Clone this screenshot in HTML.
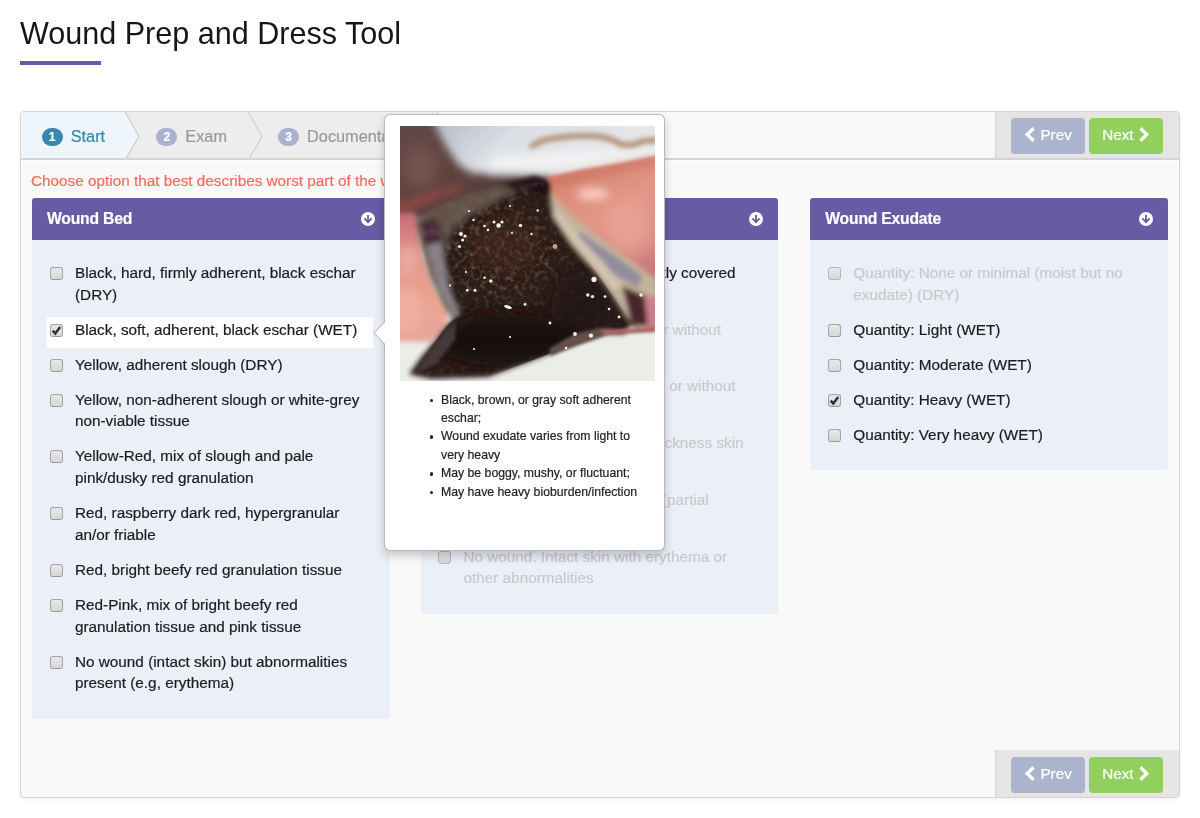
<!DOCTYPE html>
<html lang="en">
<head>
<meta charset="utf-8">
<title>Wound Prep and Dress Tool</title>
<style>
*{box-sizing:border-box}
html,body{margin:0;padding:0}
html{background:#fff}
body{width:1200px;height:818px;overflow:hidden;background:#fff;will-change:transform;font-family:"Liberation Sans",Arial,Helvetica,sans-serif;font-size:15.3px;line-height:22px;color:#1c1c1c;position:relative;-webkit-text-stroke:0.2px currentColor}
h1{position:absolute;left:20px;top:10px;margin:0;font-size:30.55px;line-height:46px;font-weight:400;color:#161616;-webkit-text-stroke:0;white-space:nowrap}
.rule{position:absolute;left:20px;top:61px;width:81px;height:4px;background:#6a5aa8}
.wizard{position:absolute;left:20px;top:111px;width:1160px;height:687px;border:1px solid #d4d4d4;border-radius:4px;background:#f9f9f9;box-shadow:0 1px 4px rgba(0,0,0,.065)}
.stepsbar{position:absolute;left:0;top:0;right:0;height:48px;border-bottom:1px solid #d4d4d4;background:#f9f9f9;border-radius:4px 4px 0 0;overflow:hidden}
.steps{list-style:none;margin:0;padding:0;position:absolute;left:0;top:0;height:47px;white-space:nowrap;font-size:0}
.steps li{display:inline-block;vertical-align:top;position:relative;height:47px;line-height:49px;padding:0 20.7px 0 31.4px;background:#ededed;color:#999;font-size:16.3px}
.steps li:first-child{padding-left:20.7px;padding-right:19.9px;border-radius:4px 0 0 0}
.steps li:last-child{padding-left:30.4px}
.steps li.active{background:#eef6fc;color:#3a87ad}
.steps li svg.chev{position:absolute;top:0;right:-15px;width:15px;height:48px;z-index:1}
.stepsbar:after{content:"";position:absolute;left:0;right:0;bottom:0;height:1px;background:#d4d4d4;z-index:3}
.wizard:before{content:"";position:absolute;left:0;right:0;top:48px;height:1px;background:#fff}
.badge{display:inline-block;min-width:21px;height:18px;line-height:18px;border-radius:9px;background:#a9b2d3;color:#fff;font-size:12px;font-weight:700;text-align:center;vertical-align:middle;margin-right:8px;position:relative;top:-1px}
.active .badge{background:#3a87ad}
.actions{position:absolute;right:0;width:184px;height:47px;background:#e5e5e5;border-left:1px solid #d4d4d4;padding:6px 0 0 15px;font-size:0;white-space:nowrap}
.actions.top{top:0;border-radius:0 4px 0 0}
.actions.bot{bottom:0;border-radius:0 0 4px 0;height:47px;padding-top:7px}
.btn{display:inline-block;height:36px;line-height:34.5px;width:74px;border-radius:4px;color:#fff;font-size:15.3px;text-align:center;vertical-align:top}
.btn.prev{background:#acb4cd;margin-right:4px}
.btn.next{background:#91cf5e}
.btn svg{width:12px;height:15px;vertical-align:-2px}
.hint{position:absolute;left:10px;top:58px;color:#f86b5c;font-size:15.3px;line-height:22px;white-space:nowrap}
.panel{position:absolute;top:86px;width:358px;background:#ebf0f8;border-radius:2px}
.panel .hd{height:42px;line-height:41px;background:#695aa5;color:#fff;font-weight:700;font-size:15.7px;padding-left:15px;border-radius:3px 3px 0 0;position:relative;letter-spacing:-0.2px}
.panel .hd svg{position:absolute;right:15px;top:14px;width:14px;height:14px}
.panel .bd{padding:21.8px 16px 11.5px 16px;line-height:21.75px}
.opt{position:relative;padding:0 14px 8px 27px;margin-bottom:5.25px}
.opt.sel{background:#fff;margin-top:-1.3px;padding-top:1.3px;margin-left:-1px;padding-left:28px;margin-right:.7px}
.opt.sel .cb{top:6.3px;left:2.5px}
.opt.dis{color:#c9c9c9}
.cb{position:absolute;left:1.5px;top:5px;width:13px;height:13px;border:1px solid #a4a4a4;border-bottom-color:#999;border-radius:3px;background:linear-gradient(#e8e8e8,#d8d8d8)}
.cb svg{position:absolute;left:-1px;top:-1px;width:13px;height:13px}
.dis .cb{border-color:#b5b5b5}

.pop{position:absolute;left:384px;top:114px;width:281px;height:437px;background:#fff;border:1px solid rgba(0,0,0,.28);border-radius:6px;box-shadow:0 5px 10px rgba(0,0,0,.2);z-index:10}
.pop .arr{position:absolute;left:-12px;top:206px;width:12px;height:24px}
.pop svg.photo{position:absolute;left:15px;top:11px;width:255px;height:255px;display:block}
.pop ul{position:absolute;left:15px;top:275.6px;width:260px;margin:0;padding:0 0 0 41px;list-style:none;font-size:12.25px;line-height:18.4px;color:#222}
.pop li{position:relative;white-space:nowrap}
.pop li:before{content:"";position:absolute;left:-11.5px;top:8px;width:3.4px;height:3.4px;border-radius:50%;background:#222}
.l1{display:block;text-align:right;white-space:nowrap}
</style>
</head>
<body>
<h1>Wound Prep and Dress Tool</h1>
<div class="rule"></div>
<div class="wizard">
  <div class="stepsbar">
    <ul class="steps">
      <li class="active"><span class="badge">1</span>Start<svg class="chev" viewBox="0 0 15 48"><path d="M0 0 L14 24.4 L0 48Z" fill="#eef6fc"/><path d="M0 -0.5 L14 24.4 L0 48.5" fill="none" stroke="#d0d0d0" stroke-width="1.3"/></svg></li><li><span class="badge">2</span>Exam<svg class="chev" viewBox="0 0 15 48"><path d="M0 0 L14 24.4 L0 48Z" fill="#ededed"/><path d="M0 -0.5 L14 24.4 L0 48.5" fill="none" stroke="#d0d0d0" stroke-width="1.3"/></svg></li><li><span class="badge">3</span>Documentation<svg class="chev" viewBox="0 0 15 48"><path d="M0 0 L14 24.4 L0 48Z" fill="#ededed"/><path d="M0 -0.5 L14 24.4 L0 48.5" fill="none" stroke="#d0d0d0" stroke-width="1.3"/></svg></li>
    </ul>
    <div class="actions top"><span class="btn prev"><svg viewBox="0 0 12 15"><path d="M9.6 1.2 L3.2 7.5 L9.6 13.8" fill="none" stroke="#fff" stroke-width="3.3"/></svg> Prev</span><span class="btn next">Next <svg viewBox="0 0 12 15"><path d="M2.4 1.2 L8.8 7.5 L2.4 13.8" fill="none" stroke="#fff" stroke-width="3.3"/></svg></span></div>
  </div>
  <div class="hint">Choose option that best describes worst part of the wound</div>

  <div class="panel" id="p1" style="left:11px;width:357.7px">
    <div class="hd">Wound Bed<svg viewBox="0 0 14 14"><circle cx="7" cy="7" r="7" fill="#fff"/><path d="M7 2.9v6.6M3.4 6.3L7 10.1l3.6-3.8" fill="none" stroke="#695aa5" stroke-width="1.8"/></svg></div>
    <div class="bd">
      <div class="opt"><span class="cb"></span>Black, hard, firmly adherent, black eschar (DRY)</div>
      <div class="opt sel"><span class="cb"><svg viewBox="0 0 13 13"><path d="M2.7 6.6L5.3 9.6L10.2 3.1" fill="none" stroke="#333" stroke-width="2.5"/></svg></span>Black, soft, adherent, black eschar (WET)</div>
      <div class="opt"><span class="cb"></span>Yellow, adherent slough (DRY)</div>
      <div class="opt"><span class="cb"></span>Yellow, non-adherent slough or white-grey non-viable tissue</div>
      <div class="opt"><span class="cb"></span>Yellow-Red, mix of slough and pale pink/dusky red granulation</div>
      <div class="opt"><span class="cb"></span>Red, raspberry dark red, hypergranular an/or friable</div>
      <div class="opt"><span class="cb"></span>Red, bright beefy red granulation tissue</div>
      <div class="opt"><span class="cb"></span>Red-Pink, mix of bright beefy red granulation tissue and pink tissue</div>
      <div class="opt"><span class="cb"></span>No wound (intact skin) but abnormalities present (e.g, erythema)</div>
    </div>
  </div>

  <div class="panel" id="p2" style="left:399.5px;width:357.7px">
    <div class="hd">Wound Depth<svg viewBox="0 0 14 14"><circle cx="7" cy="7" r="7" fill="#fff"/><path d="M7 2.9v6.6M3.4 6.3L7 10.1l3.6-3.8" fill="none" stroke="#695aa5" stroke-width="1.8"/></svg></div>
    <div class="bd">
      <div class="opt"><span class="cb"></span><span class="l1" style="width:272px">Unable to determine, mostly covered</span>with eschar</div>
      <div class="opt dis"><span class="cb"></span><span class="l1" style="width:257.6px">Deep wound/cavity, with or without</span>undermining</div>
      <div class="opt dis"><span class="cb"></span><span class="l1" style="width:272px">Moderate depth wound, with or without</span>tunneling</div>
      <div class="opt dis"><span class="cb"></span><span class="l1" style="width:280.1px">Shallow wound with full thickness skin</span>loss</div>
      <div class="opt dis"><span class="cb"></span><span class="l1" style="width:245.2px">Superficial wound, abrasion (partial</span>thickness)</div>
      <div class="opt dis"><span class="cb"></span>No wound. Intact skin with erythema or other abnormalities</div>
    </div>
  </div>

  <div class="panel" id="p3" style="left:789.3px;width:357.7px">
    <div class="hd">Wound Exudate<svg viewBox="0 0 14 14"><circle cx="7" cy="7" r="7" fill="#fff"/><path d="M7 2.9v6.6M3.4 6.3L7 10.1l3.6-3.8" fill="none" stroke="#695aa5" stroke-width="1.8"/></svg></div>
    <div class="bd">
      <div class="opt dis"><span class="cb"></span>Quantity: None or minimal (moist but no exudate) (DRY)</div>
      <div class="opt"><span class="cb"></span>Quantity: Light (WET)</div>
      <div class="opt"><span class="cb"></span>Quantity: Moderate (WET)</div>
      <div class="opt"><span class="cb"><svg viewBox="0 0 13 13"><path d="M2.7 6.6L5.3 9.6L10.2 3.1" fill="none" stroke="#333" stroke-width="2.5"/></svg></span>Quantity: Heavy (WET)</div>
      <div class="opt"><span class="cb"></span>Quantity: Very heavy (WET)</div>
    </div>
  </div>

  <div class="actions bot"><span class="btn prev"><svg viewBox="0 0 12 15"><path d="M9.6 1.2 L3.2 7.5 L9.6 13.8" fill="none" stroke="#fff" stroke-width="3.3"/></svg> Prev</span><span class="btn next">Next <svg viewBox="0 0 12 15"><path d="M2.4 1.2 L8.8 7.5 L2.4 13.8" fill="none" stroke="#fff" stroke-width="3.3"/></svg></span></div>
</div>

<div class="pop">
  <svg class="arr" viewBox="0 0 12 24"><path d="M12 0.5 L1 12 L12 23.5" fill="#fff" stroke="rgba(0,0,0,.3)" stroke-width="1"/></svg>
  <svg class="photo" viewBox="0 0 255 255"><!--PHOTO--><defs>
<filter id="b1" filterUnits="userSpaceOnUse" x="-30" y="-30" width="315" height="315"><feGaussianBlur stdDeviation="1.8"/></filter>
<filter id="b2" filterUnits="userSpaceOnUse" x="-30" y="-30" width="315" height="315"><feGaussianBlur stdDeviation="2.6"/></filter>
<filter id="b3" filterUnits="userSpaceOnUse" x="-30" y="-30" width="315" height="315"><feGaussianBlur stdDeviation="4"/></filter>
<filter id="b6" filterUnits="userSpaceOnUse" x="-40" y="-40" width="335" height="335"><feGaussianBlur stdDeviation="8"/></filter>
<filter id="b05" filterUnits="userSpaceOnUse" x="-30" y="-30" width="315" height="315"><feGaussianBlur stdDeviation="0.7"/></filter>
<filter id="gr" filterUnits="userSpaceOnUse" x="0" y="0" width="255" height="255"><feTurbulence type="fractalNoise" baseFrequency="0.2" numOctaves="2" seed="7"/><feColorMatrix type="matrix" values="0 0 0 0 0.34  0 0 0 0 0.2  0 0 0 0 0.16  1.5 0 0 0 -0.7"/><feGaussianBlur stdDeviation="0.7"/></filter>
<filter id="gr2" filterUnits="userSpaceOnUse" x="0" y="0" width="255" height="255"><feTurbulence type="fractalNoise" baseFrequency="0.09" numOctaves="3" seed="3"/><feColorMatrix type="matrix" values="0 0 0 0 0.2  0 0 0 0 0.14  0 0 0 0 0.14  1.4 0 0 0 -0.6"/><feGaussianBlur stdDeviation="1"/></filter>
<linearGradient id="gcl" x1="0" y1="0" x2="1" y2="0.25"><stop offset="0.1" stop-color="#b4b9c6"/><stop offset="0.45" stop-color="#dcdfe4"/><stop offset="1" stop-color="#e6e8ea"/></linearGradient>
<linearGradient id="gsk" x1="0" y1="0" x2="0.3" y2="1"><stop offset="0" stop-color="#d67e6a"/><stop offset="0.45" stop-color="#e39788"/><stop offset="1" stop-color="#cc7a7e"/></linearGradient>
<linearGradient id="glsk" x1="0" y1="0" x2="0" y2="1"><stop offset="0" stop-color="#c56a76"/><stop offset="0.3" stop-color="#e0948c"/><stop offset="0.7" stop-color="#eaa692"/><stop offset="1" stop-color="#e6a49c"/></linearGradient>
<linearGradient id="gmv" x1="0" y1="0" x2="1" y2="1"><stop offset="0" stop-color="#664948"/><stop offset="0.55" stop-color="#5e423f"/><stop offset="1" stop-color="#422d29"/></linearGradient>
<clipPath id="wc"><path d="M62 94 L100 72 L140 55 L150 62 L153 90 L172 118 L196 146 L214 172 L232 198 L224 208 L203 207 L165 222 L128 236 L88 251 L31 253 L9 248 L22 230 L36 214 L48 198 L60 188 L48 160 L44 130 L47 106Z"/></clipPath>
<clipPath id="oc"><path d="M16 96 L30 84 L62 70 L100 60 L135 52 L146 58 L110 76 L70 94 L54 110 L49 140 L58 172 L72 194 L58 202 L44 180 L30 150 L22 122Z"/></clipPath>
<radialGradient id="rg" gradientUnits="userSpaceOnUse" cx="100" cy="128" r="72" gradientTransform="translate(100 128) scale(1 0.85) translate(-100 -128)"><stop offset="0.45" stop-color="#fff"/><stop offset="1" stop-color="#000"/></radialGradient>
<mask id="gm" maskUnits="userSpaceOnUse" x="0" y="0" width="255" height="255"><rect width="255" height="255" fill="url(#rg)"/></mask>
<clipPath id="pc"><rect width="255" height="255"/></clipPath>
</defs>
<g clip-path="url(#pc)">
<rect width="255" height="255" fill="#ebede9"/>
<rect width="255" height="60" fill="url(#gcl)"/>
<g filter="url(#b3)">
<path d="M90 30 Q170 22 265 22 L265 40 L90 47Z" fill="#eff0f1"/>
<path d="M-20 -20 L32 -20 L36 2 L46 20 L58 38 L72 47 L130 49 L152 50 L152 80 L-20 100Z" fill="url(#gmv)"/>
<path d="M-10 80 L30 68 L60 59 L62 63 L30 75 L-10 90Z" fill="#a64e48" opacity=".75"/>
</g>
<g filter="url(#b2)">
<path d="M132 20 Q142 13 156 12 Q175 9 196 10 Q212 12 220 18 Q232 21 243 15 L258 14" fill="none" stroke="#b08c70" stroke-width="5.5" stroke-linecap="round"/>
</g>
<g filter="url(#b2)">
<path d="M-5 88 L14 86 L20 100 L22 128 L34 160 L49 186 L44 206 L30 216 L-5 215Z" fill="url(#glsk)"/>
</g>
<g filter="url(#b1)">
<path d="M146 51 L185 43 L220 37 L258 29 L258 205 L236 204 L215 180 L190 150 L165 115 L150 80Z" fill="url(#gsk)"/>
</g>
<g filter="url(#b3)">
<ellipse cx="193" cy="68" rx="16" ry="6" fill="#f8cfc2"/>
<ellipse cx="8" cy="185" rx="14" ry="22" fill="#efb2a0" opacity=".8"/>
<ellipse cx="8" cy="135" rx="9" ry="14" fill="#f0b0a4" opacity=".7"/>
<path d="M150 52 L200 42 L255 31 L255 38 L200 50 L152 62Z" fill="#c8705e" opacity=".7"/>
</g>
<g filter="url(#b6)">
<ellipse cx="20" cy="42" rx="16" ry="22" fill="#85605a" opacity=".6"/>
<ellipse cx="228" cy="100" rx="22" ry="26" fill="#eaa596" opacity=".8"/>
<ellipse cx="250" cy="160" rx="14" ry="30" fill="#c56c74" opacity=".6"/>
</g>
<g filter="url(#b2)">
<path d="M150 66 L172 90 L200 112 L230 134 L258 154 L258 198 L240 204 L225 198 L210 174 L186 150 L162 120 L150 94Z" fill="#c2b29c"/>
<path d="M180 106 L215 130 L242 150 L238 162 L205 143 L178 118Z" fill="#938c9c"/>
<path d="M158 84 L180 112 L205 138 L222 160 L214 164 L190 140 L166 112 L153 90Z" fill="#d2c4ae"/>
<path d="M222 160 L246 170 L248 200 L232 200Z" fill="#47262c"/>
<path d="M244 168 L258 172 L258 202 L248 202Z" fill="#c98088"/>
<path d="M16 96 L30 84 L62 70 L100 60 L135 52 L146 58 L110 76 L70 94 L54 110 L49 140 L58 172 L72 194 L58 202 L44 180 L30 150 L22 122Z" fill="#625247"/>
<path d="M20 98 L34 92 L44 104 L40 120 L26 122Z" fill="#4a2a3a"/>
<path d="M26 120 L40 116 L50 165 L60 190 L54 192 L38 160Z" fill="#8d848c"/>
<path d="M62 94 L100 72 L140 55 L150 62 L153 90 L172 118 L196 146 L214 172 L232 198 L224 208 L203 207 L165 222 L128 236 L88 251 L31 253 L9 248 L22 230 L36 214 L48 198 L60 188 L48 160 L44 130 L47 106Z" fill="#2b1a19"/>
<path d="M100 60 L135 50 L150 56 L148 68 L125 66Z" fill="#1c1112"/>
</g>
<g clip-path="url(#oc)" opacity=".8"><rect width="255" height="255" filter="url(#gr2)"/></g>
<g clip-path="url(#wc)"><g mask="url(#gm)"><rect width="255" height="255" filter="url(#gr)"/></g><rect width="255" height="255" filter="url(#gr)" opacity=".35"/>
<g filter="url(#b6)">
<ellipse cx="105" cy="120" rx="34" ry="26" fill="#4a2e26" opacity=".5"/>
<ellipse cx="105" cy="214" rx="72" ry="26" fill="#190c0e" opacity=".95"/><ellipse cx="185" cy="180" rx="34" ry="36" fill="#1e0e10" opacity=".6"/>
</g>
</g>
<g filter="url(#b1)">
<path d="M46 204 L56 196 L55 214 L36 238 L14 248 L28 228Z" fill="#46383a"/>
<path d="M150 222 L175 208 L200 202 L226 204 L205 210 L175 220 L150 230Z" fill="#63514a"/>
<path d="M200 204 L255 201 L255 206 L205 209Z" fill="#a86868"/>
</g>
<g filter="url(#b05)" fill="#f6f1ea">
<circle cx="98.6" cy="99.5" r="2.3"/><circle cx="102" cy="96" r="1.6"/><circle cx="94" cy="96" r="1.5"/><circle cx="120.5" cy="99.5" r="1.7"/><circle cx="84.5" cy="100" r="1.3"/><circle cx="61" cy="108" r="2"/><circle cx="65" cy="110" r="1.6"/><circle cx="62.6" cy="114" r="1.5"/><circle cx="59.5" cy="120.5" r="1.5"/><circle cx="73.5" cy="94" r="1.2"/><circle cx="131.5" cy="108" r="1.2"/><circle cx="137.7" cy="84.5" r="1.2"/><circle cx="110" cy="80" r="1.1"/><circle cx="69" cy="85" r="1.1"/><circle cx="88" cy="104" r="1.2"/><circle cx="112" cy="107" r="1.1"/>
<circle cx="90.8" cy="155" r="1.7"/><circle cx="84.5" cy="151.8" r="1.3"/><circle cx="67.3" cy="164.3" r="1.4"/><circle cx="75" cy="164.3" r="1.5"/><circle cx="50" cy="159.6" r="1.1"/><circle cx="66" cy="146" r="1.1"/><ellipse cx="108" cy="181" rx="4" ry="1.5" transform="rotate(20 108 181)"/><circle cx="125" cy="178.4" r="1.4"/><circle cx="74" cy="223" r="1.1"/><circle cx="110" cy="211" r="1.1"/>
<circle cx="194" cy="153.4" r="2.6"/><circle cx="187.8" cy="169" r="1.7"/><circle cx="192.5" cy="170.6" r="1.7"/><circle cx="205" cy="170.6" r="1.4"/><circle cx="241" cy="169" r="1.7"/><circle cx="219" cy="191" r="1.4"/><circle cx="150" cy="197" r="1.4"/><circle cx="175" cy="208" r="1.9"/><circle cx="191" cy="209.7" r="2.1"/><circle cx="166" cy="222" r="1.3"/><circle cx="209" cy="183" r="1.3"/>
<circle cx="155" cy="120.5" r="2.4" fill="#c8a080"/>
</g>
</g>
<!--/PHOTO--></svg>
  <ul>
    <li>Black, brown, or gray soft adherent<br>eschar;</li>
    <li>Wound exudate varies from light to<br>very heavy</li>
    <li>May be boggy, mushy, or fluctuant;</li>
    <li>May have heavy bioburden/infection</li>
  </ul>
</div>
</body>
</html>
